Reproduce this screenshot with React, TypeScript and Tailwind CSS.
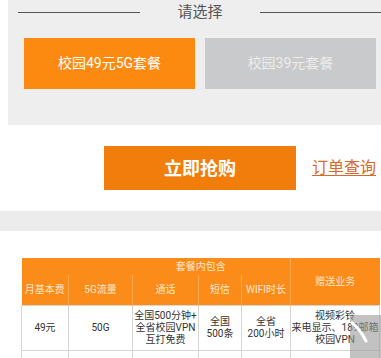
import React from "react";

const font = { fontFamily: 'Roboto, "Noto Sans CJK SC", sans-serif' };

const hd = "font-normal text-[10px] leading-[13px] text-[#fde7cc] text-center p-0 whitespace-nowrap";

const Td = ({ children }: { children?: React.ReactNode }) => (
  <td className="border border-[#d6d6d6] text-[10px] leading-[12px] text-[#333] text-center p-0 align-middle whitespace-nowrap overflow-hidden">
    {children}
  </td>
);

export default function App() {
  return (
    <div className="w-[381px] h-[358px] bg-white overflow-hidden relative" style={font}>
      {/* choose panel */}
      <div className="ml-[8px] h-[125px] bg-[#eeeeee]">
        <div className="h-[24px] flex items-center">
          <div className="ml-[10px] w-[122px] h-px bg-[#555]" />
          <div className="flex-1 text-center text-[15px] text-[#555] leading-none">请选择</div>
          <div className="w-[121px] h-px bg-[#555]" />
        </div>
        <div className="mt-[14px] ml-[16px] flex gap-[10px]">
          <div className="w-[171px] h-[51px] bg-[#fd8a10] flex items-center justify-center text-white text-[14px]">
            校园49元5G套餐
          </div>
          <div className="w-[171px] h-[51px] bg-[#c9cacb] flex items-center justify-center text-[#ececec] text-[14px]">
            校园39元套餐
          </div>
        </div>
      </div>

      {/* buy */}
      <div className="h-[86px] flex items-start pt-[21px]">
        <div className="ml-[104px] w-[192px] h-[44px] bg-[#f17e0c] flex items-center justify-center text-white text-[18px] font-bold">
          立即抢购
        </div>
        <div className="ml-[16px] mt-[12px] text-[16px] leading-[20px] text-[#d9692a] underline underline-offset-2">
          订单查询
        </div>
      </div>

      <div className="h-[20px] bg-[#ececec]" />

      {/* table */}
      <div className="pt-[27px] pl-[21px]">
        <table className="border-collapse table-fixed w-[358px]">
          <colgroup>
            <col className="w-[47px]" />
            <col className="w-[64px]" />
            <col className="w-[66px]" />
            <col className="w-[43px]" />
            <col className="w-[49px]" />
            <col className="w-[89px]" />
          </colgroup>
          <thead className="bg-[#fb8c1a]">
            <tr className="h-[17px]">
              <th colSpan={5} className={`${hd} pl-[90px] border-r border-[#fca94f]`}>
                套餐内包含
              </th>
              <th rowSpan={2} className={hd}>
                赠送业务
              </th>
            </tr>
            <tr className="h-[30px]">
              <th className={`${hd} border-r border-[#fca94f]`}>月基本费</th>
              <th className={`${hd} border-r border-[#fca94f]`}>5G流量</th>
              <th className={`${hd} border-r border-[#fca94f]`}>通话</th>
              <th className={`${hd} border-r border-[#fca94f]`}>短信</th>
              <th className={`${hd} border-r border-[#fca94f]`}>WIFI时长</th>
            </tr>
          </thead>
          <tbody>
            <tr className="h-[45px]">
              <Td>49元</Td>
              <Td>50G</Td>
              <Td>
                全国500分钟+
                <br />
                全省校园VPN
                <br />
                互打免费
              </Td>
              <Td>
                全国
                <br />
                500条
              </Td>
              <Td>
                全省
                <br />
                200小时
              </Td>
              <Td>
                视频彩铃
                <br />
                来电显示、189邮箱
                <br />
                校园VPN
              </Td>
            </tr>
            <tr className="h-[30px]">
              <Td />
              <Td />
              <Td />
              <Td />
              <Td />
              <Td />
            </tr>
          </tbody>
        </table>
      </div>

      {/* watermark */}
      <div className="absolute left-[350px] top-[315px] w-[31px] h-[43px] bg-[#9a9a9a]/60 overflow-hidden">
        <svg width="31" height="43" viewBox="0 0 31 43">
          <path d="M2 8 Q10 14 16 26" stroke="#fff" strokeWidth="3" fill="none" strokeLinecap="round" />
        </svg>
      </div>
    </div>
  );
}
